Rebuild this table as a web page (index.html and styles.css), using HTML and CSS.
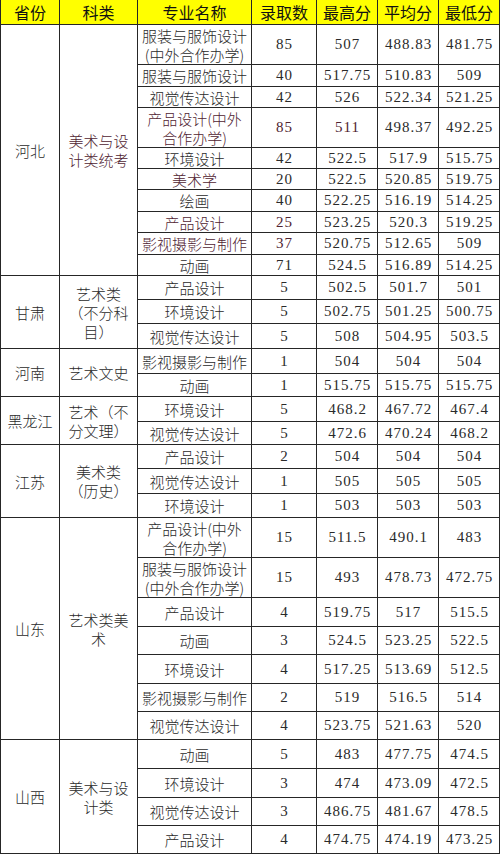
FILE: index.html
```html
<!DOCTYPE html>
<html lang="zh-CN">
<head>
<meta charset="utf-8">
<title>录取分数</title>
<link rel="stylesheet" href="styles.css">
</head>
<body>
<div class="sheet">
  <div class="h">省份</div><div class="h">科类</div><div class="h">专业名称</div><div class="h">录取数</div><div class="h">最高分</div><div class="h">平均分</div><div class="h">最低分</div>

  <div class="c prov s10">河北</div><div class="c cat s10 hl">美术与设计类统考</div>
  <div class="c maj r40">服装与服饰设计(中外合作办学)</div><div class="c n">85</div><div class="c n">507</div><div class="c n">488.83</div><div class="c n">481.75</div>
  <div class="c maj r22">服装与服饰设计</div><div class="c n">40</div><div class="c n">517.75</div><div class="c n">510.83</div><div class="c n">509</div>
  <div class="c maj r21">视觉传达设计</div><div class="c n">42</div><div class="c n">526</div><div class="c n">522.34</div><div class="c n">521.25</div>
  <div class="c maj r40 hl">产品设计(中外合作办学)</div><div class="c n hl">85</div><div class="c n hl">511</div><div class="c n">498.37</div><div class="c n">492.25</div>
  <div class="c maj r21">环境设计</div><div class="c n">42</div><div class="c n">522.5</div><div class="c n">517.9</div><div class="c n">515.75</div>
  <div class="c maj r21 hl">美术学</div><div class="c n">20</div><div class="c n">522.5</div><div class="c n">520.85</div><div class="c n">519.75</div>
  <div class="c maj r22">绘画</div><div class="c n">40</div><div class="c n">522.25</div><div class="c n">516.19</div><div class="c n">514.25</div>
  <div class="c maj r21 hl">产品设计</div><div class="c n hl">25</div><div class="c n">523.25</div><div class="c n">520.3</div><div class="c n">519.25</div>
  <div class="c maj r22 hl">影视摄影与制作</div><div class="c n hl">37</div><div class="c n">520.75</div><div class="c n">512.65</div><div class="c n">509</div>
  <div class="c maj r21">动画</div><div class="c n">71</div><div class="c n">524.5</div><div class="c n">516.89</div><div class="c n">514.25</div>

  <div class="c prov s3">甘肃</div><div class="c cat s3">艺术类（不分科目）</div>
  <div class="c maj r24">产品设计</div><div class="c n">5</div><div class="c n">502.5</div><div class="c n">501.7</div><div class="c n">501</div>
  <div class="c maj r24">环境设计</div><div class="c n">5</div><div class="c n">502.75</div><div class="c n">501.25</div><div class="c n">500.75</div>
  <div class="c maj r25">视觉传达设计</div><div class="c n">5</div><div class="c n">508</div><div class="c n">504.95</div><div class="c n">503.5</div>

  <div class="c prov s2">河南</div><div class="c cat s2">艺术文史</div>
  <div class="c maj r25">影视摄影与制作</div><div class="c n">1</div><div class="c n">504</div><div class="c n">504</div><div class="c n">504</div>
  <div class="c maj r23">动画</div><div class="c n">1</div><div class="c n">515.75</div><div class="c n">515.75</div><div class="c n">515.75</div>

  <div class="c prov s2">黑龙江</div><div class="c cat s2">艺术（不分文理）</div>
  <div class="c maj r25">环境设计</div><div class="c n">5</div><div class="c n">468.2</div><div class="c n">467.72</div><div class="c n">467.4</div>
  <div class="c maj r23">视觉传达设计</div><div class="c n">5</div><div class="c n">472.6</div><div class="c n">470.24</div><div class="c n">468.2</div>

  <div class="c prov s3">江苏</div><div class="c cat s3">美术类（历史）</div>
  <div class="c maj r24">产品设计</div><div class="c n">2</div><div class="c n">504</div><div class="c n">504</div><div class="c n">504</div>
  <div class="c maj r25">视觉传达设计</div><div class="c n">1</div><div class="c n">505</div><div class="c n">505</div><div class="c n">505</div>
  <div class="c maj r24">环境设计</div><div class="c n">1</div><div class="c n">503</div><div class="c n">503</div><div class="c n">503</div>

  <div class="c prov s7">山东</div><div class="c cat s7">艺术类美术</div>
  <div class="c maj r40">产品设计(中外合作办学)</div><div class="c n">15</div><div class="c n">511.5</div><div class="c n">490.1</div><div class="c n">483</div>
  <div class="c maj r40">服装与服饰设计(中外合作办学)</div><div class="c n">15</div><div class="c n">493</div><div class="c n">478.73</div><div class="c n">472.75</div>
  <div class="c maj r29">产品设计</div><div class="c n">4</div><div class="c n">519.75</div><div class="c n">517</div><div class="c n">515.5</div>
  <div class="c maj r28">动画</div><div class="c n">3</div><div class="c n">524.5</div><div class="c n">523.25</div><div class="c n">522.5</div>
  <div class="c maj r29">环境设计</div><div class="c n">4</div><div class="c n">517.25</div><div class="c n">513.69</div><div class="c n">512.5</div>
  <div class="c maj r28">影视摄影与制作</div><div class="c n">2</div><div class="c n">519</div><div class="c n">516.5</div><div class="c n">514</div>
  <div class="c maj r28">视觉传达设计</div><div class="c n">4</div><div class="c n">523.75</div><div class="c n">521.63</div><div class="c n">520</div>

  <div class="c prov s4">山西</div><div class="c cat s4">美术与设计类</div>
  <div class="c maj r29">动画</div><div class="c n">5</div><div class="c n">483</div><div class="c n">477.75</div><div class="c n">474.5</div>
  <div class="c maj r29">环境设计</div><div class="c n">3</div><div class="c n">474</div><div class="c n">473.09</div><div class="c n">472.5</div>
  <div class="c maj r28">视觉传达设计</div><div class="c n">3</div><div class="c n">486.75</div><div class="c n">481.67</div><div class="c n">478.5</div>
  <div class="c maj r28">产品设计</div><div class="c n">4</div><div class="c n">474.75</div><div class="c n">474.19</div><div class="c n">473.25</div>
</div>
</body>
</html>
```
FILE: styles.css
```css
html, body {
  margin: 0;
  padding: 0;
  background: #ffffff;
}

.sheet {
  width: 500px;
  height: 854px;
  box-sizing: border-box;
  display: grid;
  grid-template-columns: 58px 77px 113px 64px 60px 60px 60px;
  grid-auto-rows: min-content;
  gap: 1px;
  padding: 0 1px 1px 1px;
  background: #262626;
  font-family: "Noto Sans CJK SC", "Noto Sans", sans-serif;
  font-weight: 300;
  color: #2a2a2a;
  font-size: 15px;
  line-height: 19px;
}

.h {
  height: 24px;
  background: #ffff00;
  color: #111111;
  font-size: 16px;
  font-weight: 400;
  display: flex;
  align-items: center;
  justify-content: center;
}

.c {
  background: #ffffff;
  display: flex;
  align-items: center;
  justify-content: center;
  text-align: center;
  box-sizing: border-box;
}

.prov { padding: 0 2px; }
.cat { padding: 0 8px; }
.maj { padding: 0 3px; }

.n {
  font-family: "Liberation Serif", "DejaVu Serif", serif;
  font-weight: 400;
  font-size: 15px;
  letter-spacing: 1px;
  padding-left: 1px;
}

.hl { color: #4f2331; }

.s10 { grid-row: span 10; }
.s7 { grid-row: span 7; }
.s4 { grid-row: span 4; }
.s3 { grid-row: span 3; }
.s2 { grid-row: span 2; }

.r40 { height: 39px; }
.r29 { height: 28px; }
.r28 { height: 27px; }
.r25 { height: 24px; }
.r24 { height: 23px; }
.r23 { height: 22px; }
.r22 { height: 21px; }
.r21 { height: 20px; }
```
